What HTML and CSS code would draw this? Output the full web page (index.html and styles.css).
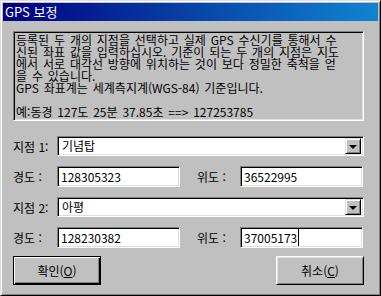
FILE: index.html
```html
<!DOCTYPE html>
<html lang="ko">
<head>
<meta charset="UTF-8">
<meta name="viewport" content="width=device-width, initial-scale=1.0">
<title>GPS 보정</title>
<link rel="stylesheet" href="styles.css">
</head>
<body>
<div class="dialog">
    <div class="titlebar">GPS 보정</div>
    <div class="content">
        <div class="info">
            <p>등록된 두 개의 지점을 선택하고 실제 GPS 수신기를 통해서 수</p>
            <p>신된 좌표 값을 입력하십시오. 기준이 되는 두 개의 지점은 지도</p>
            <p>에서 서로 대각선 방향에 위치하는 것이 보다 정밀한 축척을 얻</p>
            <p>을 수 있습니다.</p>
            <p>GPS 좌표계는 세계측지계(WGS-84) 기준입니다.</p>
            <p class="example">예:동경 127도 25분 37.85초 ==&gt; 127253785</p>
        </div>

        <div class="row first">
            <span class="label">지점 1:</span>
            <div class="combo">
                <span class="combo-text">기념탑</span>
                <span class="drop"><span class="arrow"></span></span>
            </div>
        </div>
        <div class="row">
            <span class="label">경도 :</span>
            <div class="edit">128305323</div>
            <span class="label lat">위도 :</span>
            <div class="edit">36522995</div>
        </div>
        <div class="row">
            <span class="label">지점 2:</span>
            <div class="combo">
                <span class="combo-text">아평</span>
                <span class="drop"><span class="arrow"></span></span>
            </div>
        </div>
        <div class="row">
            <span class="label">경도 :</span>
            <div class="edit">128230382</div>
            <span class="label lat">위도 :</span>
            <div class="edit"><span class="caret">37005173</span></div>
        </div>

        <div class="buttons">
            <button type="button" class="btn default">확인(<u>O</u>)</button>
            <button type="button" class="btn">취소(<u>C</u>)</button>
        </div>
    </div>
</div>
</body>
</html>
```

FILE: styles.css
```css
body {
    margin: 0;
    padding: 0;
    font-family: "Noto Sans CJK KR", "Liberation Sans", sans-serif;
    font-size: 12px;
    color: #000;
    background-color: #c0c0c0;
}
.dialog {
    width: 381px;
    height: 296px;
    box-sizing: border-box;
    background-color: #c0c0c0;
    border: 1px solid;
    border-color: #dfdfdf #000 #000 #dfdfdf;
    box-shadow: inset 1px 1px #fff, inset -1px -1px #808080;
    padding: 2px;
}
.titlebar {
    height: 18px;
    line-height: 18px;
    padding-left: 2px;
    color: #fff;
    font-size: 13px;
    background: linear-gradient(to right, #000080, #1084d0);
}
.content {
    padding: 10px 14px 0 10px;
}
.info {
    height: 90px;
    box-sizing: border-box;
    border: 1px solid;
    border-color: #808080 #fff #fff #808080;
    box-shadow: inset 1px 1px #000, inset -1px -1px #dfdfdf;
    padding: 2px 0 0 2px;
    word-spacing: 1.5px;
    white-space: nowrap;
    overflow: hidden;
}
.info p {
    margin: 0;
    height: 12px;
    line-height: 11px;
}
.info p.example {
    margin-top: 12px;
}
.row {
    display: flex;
    align-items: center;
    margin-top: 10px;
}
.row.first {
    margin-top: 15px;
}
.label {
    width: 44px;
    flex-shrink: 0;
}
.label.lat {
    width: 43px;
    margin-left: 17px;
}
.combo, .edit {
    box-sizing: border-box;
    background-color: #fff;
    border: 1px solid;
    border-color: #808080 #fff #fff #808080;
    box-shadow: inset 1px 1px #000, inset -1px -1px #dfdfdf;
}
.combo {
    flex: 1;
    height: 20px;
    display: flex;
    align-items: center;
    padding: 2px;
}
.combo-text {
    flex: 1;
    padding-left: 2px;
    line-height: 16px;
}
.drop {
    width: 16px;
    height: 16px;
    box-sizing: border-box;
    background-color: #c0c0c0;
    border: 1px solid;
    border-color: #dfdfdf #000 #000 #dfdfdf;
    box-shadow: inset 1px 1px #fff, inset -1px -1px #808080;
    display: flex;
    align-items: center;
    justify-content: center;
}
.arrow {
    width: 0;
    height: 0;
    border-left: 4px solid transparent;
    border-right: 4px solid transparent;
    border-top: 4px solid #000;
    margin-top: 1px;
}
.edit {
    width: 123px;
    height: 21px;
    padding: 2px 3px;
    line-height: 16px;
}
.caret {
    border-right: 1px solid #000;
    padding-right: 1px;
}
.buttons {
    display: flex;
    justify-content: space-between;
    margin-top: 8px;
}
.btn {
    width: 88px;
    height: 29px;
    font-family: inherit;
    font-size: 12px;
    color: #000;
    background-color: #c0c0c0;
    border: 1px solid;
    border-color: #fff #000 #000 #fff;
    box-shadow: inset 1px 1px #dfdfdf, inset -1px -1px #808080;
    padding: 0;
    cursor: pointer;
}
.btn.default {
    border: 1px solid #000;
    box-shadow: inset 1px 1px #fff, inset -1px -1px #000, inset -2px -2px #808080;
}
.btn u {
    text-decoration-thickness: 1px;
}
```
